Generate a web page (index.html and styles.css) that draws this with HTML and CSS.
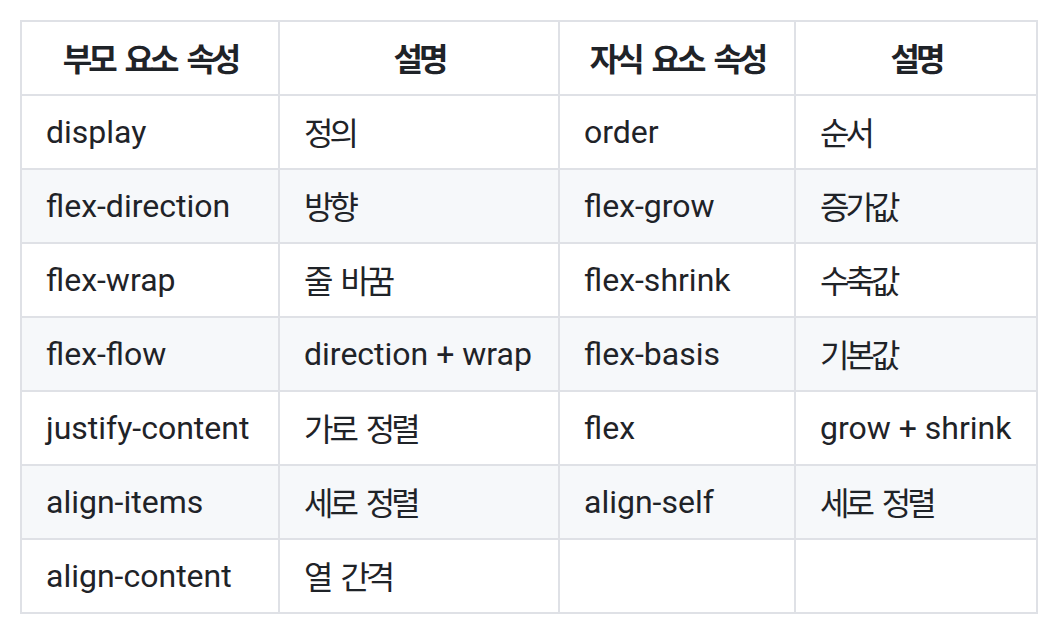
FILE: index.html
```html
<!DOCTYPE html>
<html lang="ko">
<head>
<meta charset="utf-8">
<link rel="stylesheet" href="styles.css">
</head>
<body>
<table class="props">
  <colgroup>
    <col class="c1"><col class="c2"><col class="c3"><col class="c4">
  </colgroup>
  <thead>
    <tr>
      <th><span class="ko">부모 요소 속성</span></th>
      <th><span class="ko">설명</span></th>
      <th><span class="ko">자식 요소 속성</span></th>
      <th><span class="ko">설명</span></th>
    </tr>
  </thead>
  <tbody>
    <tr><td>display</td><td><span class="ko">정의</span></td><td>order</td><td><span class="ko">순서</span></td></tr>
    <tr><td>flex-direction</td><td><span class="ko">방향</span></td><td>flex-grow</td><td><span class="ko">증가값</span></td></tr>
    <tr><td>flex-wrap</td><td><span class="ko">줄 바꿈</span></td><td>flex-shrink</td><td><span class="ko">수축값</span></td></tr>
    <tr><td>flex-flow</td><td>direction + wrap</td><td>flex-basis</td><td><span class="ko">기본값</span></td></tr>
    <tr><td>justify-content</td><td><span class="ko">가로 정렬</span></td><td>flex</td><td>grow + shrink</td></tr>
    <tr><td>align-items</td><td><span class="ko">세로 정렬</span></td><td>align-self</td><td><span class="ko">세로 정렬</span></td></tr>
    <tr><td>align-content</td><td><span class="ko">열 간격</span></td><td></td><td></td></tr>
  </tbody>
</table>
</body>
</html>
```
FILE: styles.css
```css
html, body {
  margin: 0;
  background: #ffffff;
}
body {
  padding: 20px;
  font-family: Roboto, "Noto Sans CJK KR", sans-serif;
  font-size: 32px;
  line-height: 48px;
  color: #1f2328;
}
.props {
  border-collapse: collapse;
  table-layout: fixed;
  width: 1018px;
}
.c1 { width: 258px; }
.c2 { width: 280px; }
.c3 { width: 236px; }
.c4 { width: 242px; }
.props th,
.props td {
  border: 2px solid #dfe1e6;
  padding: 12px 24px;
  height: 48px;
  text-align: left;
  white-space: nowrap;
  overflow: hidden;
  vertical-align: middle;
}
.props th {
  text-align: center;
  font-weight: 700;
}
.props tbody tr:nth-child(even) {
  background: #f6f8fa;
}
.ko {
  display: inline-block;
  vertical-align: top;
  height: 48px;
  line-height: 46px;
  font-family: "Noto Sans CJK KR", sans-serif;
  letter-spacing: -4px;
  word-spacing: 6px;
}
```
